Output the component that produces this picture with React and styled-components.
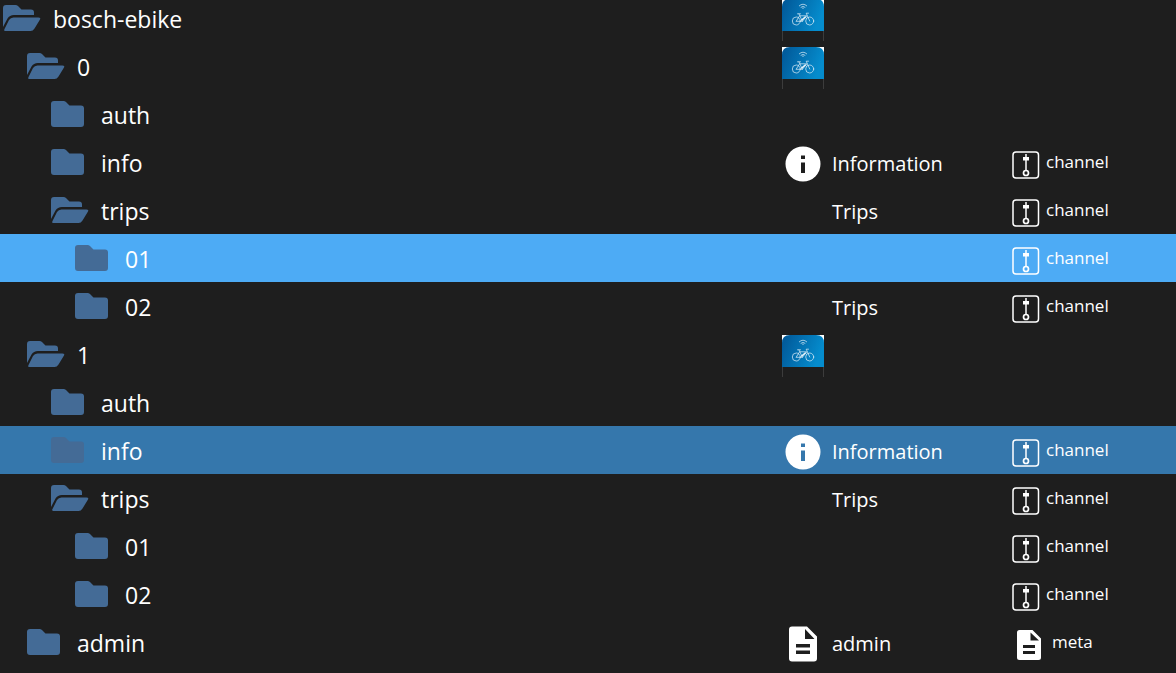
import styled, { createGlobalStyle, css } from "styled-components";

const GlobalStyle = createGlobalStyle`
  body {
    margin: 0;
    overflow: hidden;
    background-color: #1e1e1e;
    color: #ffffff;
    font-family: "Open Sans", "Noto Sans", sans-serif;
  }
`

const Tree = styled.ul`
  margin: -6px 0 0;
  padding: 0;
  list-style: none;
`

const rowColors = {
  selected: "#4dabf5",
  hover: "#3577ac",
}

const Row = styled.li`
  display: grid;
  grid-template-columns: minmax(0, 1fr) 230px 164px;
  height: 48px;
  ${(props) => rowColors[props.$state] && css`
    background-color: ${rowColors[props.$state]};
  `}
`

const NameCell = styled.div`
  display: flex;
  align-items: center;
  gap: 10px;
  padding-left: ${(props) => props.$level * 24}px;
`

const FolderSvg = styled.svg`
  width: 43px;
  height: 48px;
  flex: none;
  fill: #446b96;
`

const Name = styled.span`
  font-size: 23px;
  line-height: 32px;
  padding-top: 2px;
`

const InfoCell = styled.div`
  display: flex;
  align-items: center;
  gap: 8px;
`

const IconSlot = styled.div`
  width: 42px;
  height: 48px;
  flex: none;

  svg {
    display: block;
    width: 42px;
    height: 48px;
  }
`

const Label = styled.span`
  font-size: 20px;
  line-height: 32px;
  padding-top: 4px;
`

const TypeCell = styled.div`
  display: flex;
  align-items: center;
  gap: ${(props) => (props.$wide ? 12 : 6)}px;

  svg {
    width: 28px;
    height: 48px;
    flex: none;
    overflow: visible;
  }
`

const TypeLabel = styled.span`
  font-size: 17px;
  line-height: 32px;
`

const Folder = ({ open }) => (
  <FolderSvg viewBox="0 0 43 48" aria-hidden="true">
    {open ? (
      <>
        <path d="M3 33V14Q3 11 6 11H15.500Q17 11 18 12L21.500 15.500H31Q34 15.500 34 18.500V21H14Q9.500 21 7.500 24.500Z" />
        <path d="M13.500 23.500H38.500Q41 23.500 40 25.500L34.500 34.500Q33 37 30.500 37H5.500Q3.500 37 4.500 35L9 26Q10.500 23.500 13.500 23.500Z" />
      </>
    ) : (
      <path d="M3 14Q3 11 6 11H15.500Q17 11 18 12L21.500 15.500H33Q36 15.500 36 18.500V34Q36 37 33 37H6Q3 37 3 34Z" />
    )}
  </FolderSvg>
)

const EbikeLogo = () => (
  <svg viewBox="0 0 42 48" aria-hidden="true">
    <defs>
      <linearGradient id="ebike" x1="0" y1="0" x2="1" y2="0.3">
        <stop offset="0" stopColor="#015696" />
        <stop offset="1" stopColor="#058ccd" />
      </linearGradient>
    </defs>
    <path d="M0 5H42V14H0Z" fill="#fff" />
    <path d="M0 37V13Q0 5 8 5H34Q42 5 42 13V37Z" fill="url(#ebike)" />
    <path d="M0.500 37V47M41.500 37V47" stroke="#3c3c3c" fill="none" />
    <g fill="none" stroke="#e4f1f9" strokeLinecap="round" strokeLinejoin="round" strokeWidth="0.700">
      <path d="M17.300 11.800Q21 8.400 24.700 11.800M19 13.200Q21 11.400 23 13.200" />
      <path d="M20.600 14.200H21.400" />
      <circle cx="14.300" cy="27" r="4" />
      <circle cx="27.700" cy="27" r="4" />
      <path d="M14.300 27L17.600 21.800H24.800L20.400 27.300H14.300M17 20L20.400 27.300M27.700 27L24.200 19.200H26.500M15.500 19.800H18.500" />
      <path d="M19.800 26L23.200 23" strokeWidth="1.600" />
    </g>
  </svg>
)

const InfoIcon = () => (
  <svg viewBox="0 0 42 48" aria-hidden="true">
    <path
      fillRule="evenodd"
      fill="#fff"
      d="M21 8.500A17.500 17.500 0 1 0 21 43.500A17.500 17.500 0 1 0 21 8.500ZM19 17.500H23V21H19ZM19 24.500H23V35H19Z"
    />
  </svg>
)

const FileIcon = () => (
  <svg viewBox="0 0 42 48" aria-hidden="true">
    <path
      fillRule="evenodd"
      fill="#fff"
      d="M10 8.500H25L35 18.500V40.500Q35 43.500 32 43.500H10Q7 43.500 7 40.500V11.500Q7 8.500 10 8.500ZM23 11V21H32.500ZM14 26V29.500H28V26ZM14 32.500V36H28V32.500Z"
    />
  </svg>
)

const ChannelIcon = () => (
  <svg viewBox="0 0 28 48" fill="none" stroke="#fff" aria-hidden="true">
    <rect x="1" y="14" width="25.500" height="26" rx="3" strokeWidth="1.500" />
    <path d="M14 16V32" strokeWidth="1.500" />
    <path d="M11 19H17V22.500H11Z" fill="#fff" stroke="none" />
    <circle cx="14" cy="35" r="2.500" strokeWidth="1.700" />
  </svg>
)

const MetaIcon = () => (
  <svg viewBox="0 0 28 48" aria-hidden="true">
    <path
      fillRule="evenodd"
      fill="#fff"
      d="M7.500 12H20.500L29 20.500V39.500Q29 42 26.500 42H7.500Q5 42 5 39.500V14.500Q5 12 7.500 12ZM18.500 14.500V22.500H27ZM11 27V30H23V27ZM11 33V36H23V33Z"
    />
  </svg>
)

const icons = {
  ebike: EbikeLogo,
  info: InfoIcon,
  file: FileIcon,
}

const rows = [
  { name: "bosch-ebike", level: 0, open: true, icon: "ebike" },
  { name: "0", level: 1, open: true, icon: "ebike" },
  { name: "auth", level: 2 },
  { name: "info", level: 2, icon: "info", label: "Information", type: "channel" },
  { name: "trips", level: 2, open: true, label: "Trips", type: "channel" },
  { name: "01", level: 3, type: "channel", state: "selected" },
  { name: "02", level: 3, label: "Trips", type: "channel" },
  { name: "1", level: 1, open: true, icon: "ebike" },
  { name: "auth", level: 2 },
  { name: "info", level: 2, icon: "info", label: "Information", type: "channel", state: "hover" },
  { name: "trips", level: 2, open: true, label: "Trips", type: "channel" },
  { name: "01", level: 3, type: "channel" },
  { name: "02", level: 3, type: "channel" },
  { name: "admin", level: 1, icon: "file", label: "admin", type: "meta" },
]

const App = () => {
  return (
    <>
      <GlobalStyle />
      <Tree role="tree">
        {rows.map((row, index) => {
          const Icon = icons[row.icon]
          return (
            <Row
              key={index}
              role="treeitem"
              aria-level={row.level + 1}
              aria-selected={row.state === "selected"}
              $state={row.state}
            >
              <NameCell $level={row.level}>
                <Folder open={row.open} />
                <Name>{row.name}</Name>
              </NameCell>
              <InfoCell>
                <IconSlot>{Icon && <Icon />}</IconSlot>
                {row.label && <Label>{row.label}</Label>}
              </InfoCell>
              {row.type && (
                <TypeCell $wide={row.type === "meta"}>
                  {row.type === "meta" ? <MetaIcon /> : <ChannelIcon />}
                  <TypeLabel>{row.type}</TypeLabel>
                </TypeCell>
              )}
            </Row>
          )
        })}
      </Tree>
    </>
  )
}

export default App
